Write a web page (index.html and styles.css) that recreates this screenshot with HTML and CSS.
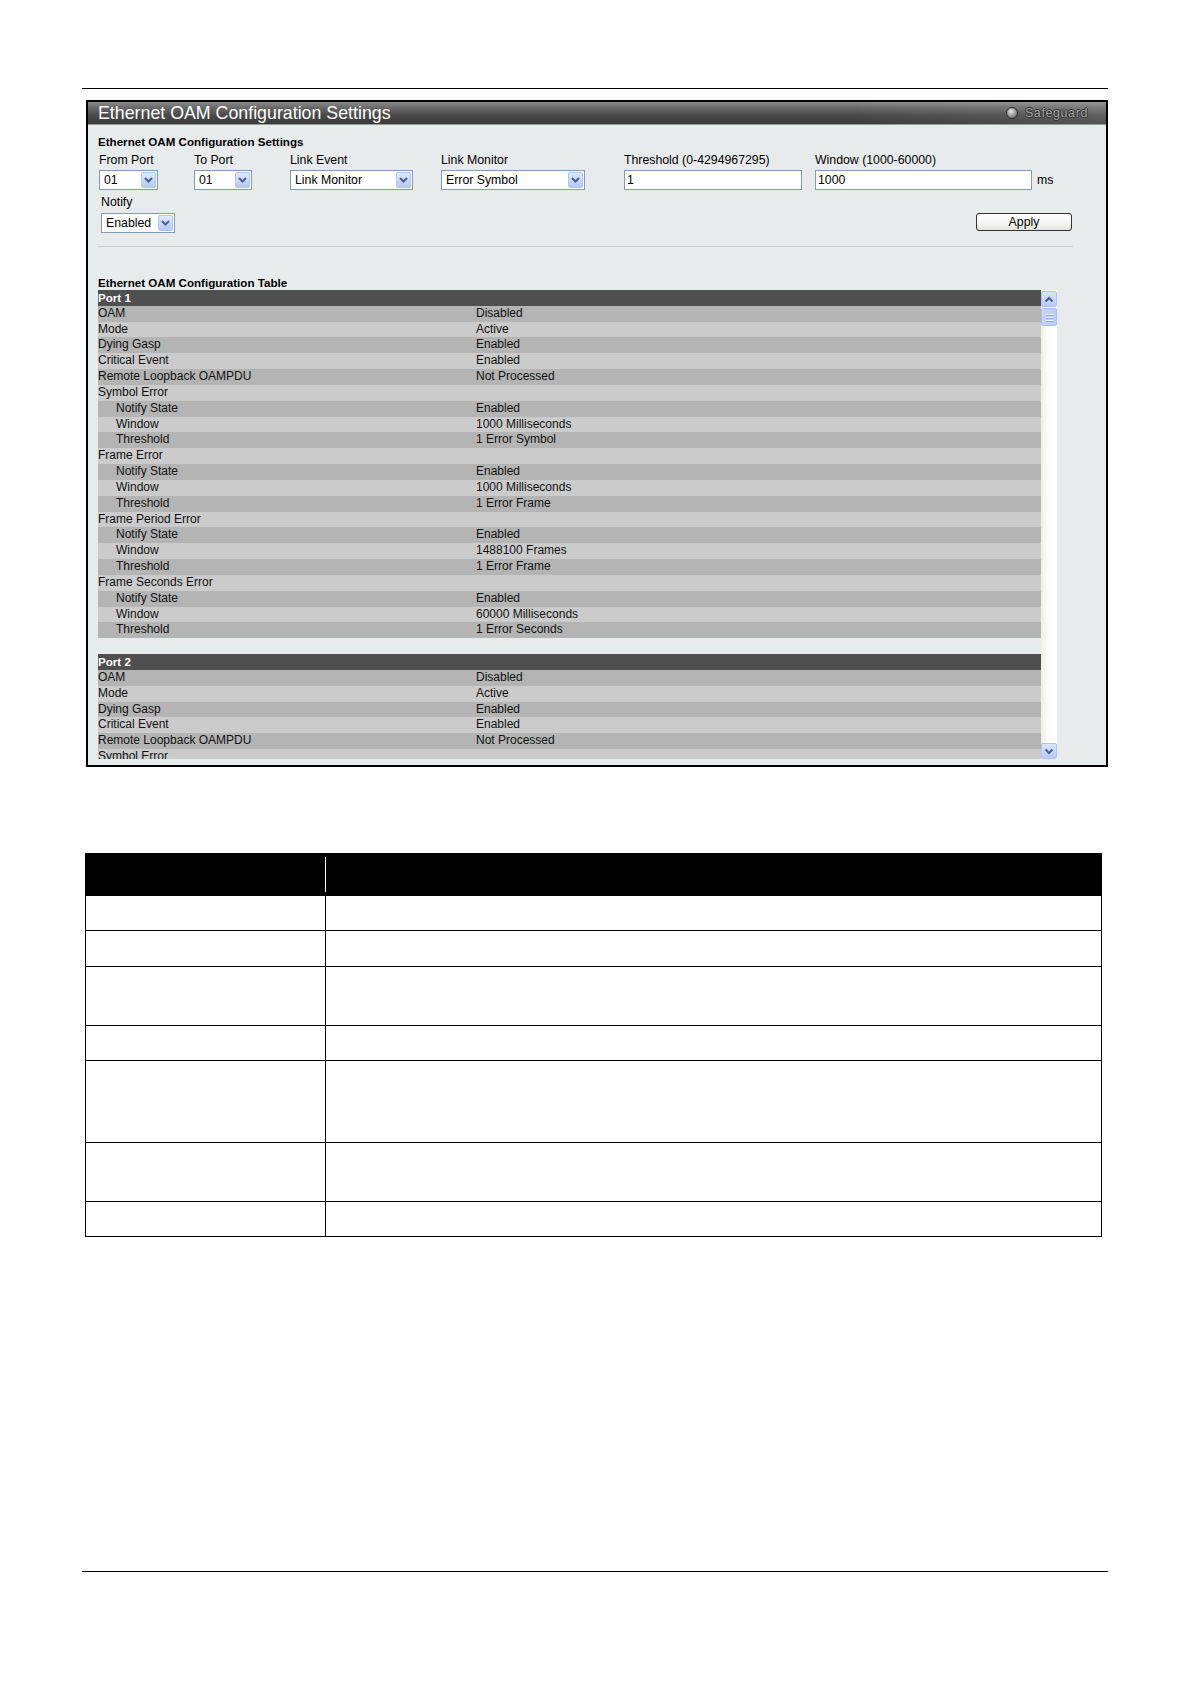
FILE: index.html
```html
<!DOCTYPE html>
<html>
<head>
<meta charset="utf-8">
<link rel="stylesheet" href="styles.css">
</head>
<body>
<div class="page">
  <div class="rule rule-top"></div>

  <div class="panel">
    <div class="titlebar">
      <span class="title">Ethernet OAM Configuration Settings</span>
      <span class="safeguard"><span class="sg-dot"></span><span class="sg-text">Safeguard</span></span>
    </div>

    <div class="section-title">Ethernet OAM Configuration Settings</div>

    <div class="form-row">
      <div class="field f1">
        <div class="label">From Port</div>
        <div class="select w59"><span class="sv">01</span><span class="sbtn"><svg width="9" height="6" viewBox="0 0 9 6"><path d="M1 1 L4.5 4.5 L8 1" fill="none" stroke="#4a5f8a" stroke-width="2"/></svg></span></div>
      </div>
      <div class="field f2">
        <div class="label">To Port</div>
        <div class="select w58"><span class="sv">01</span><span class="sbtn"><svg width="9" height="6" viewBox="0 0 9 6"><path d="M1 1 L4.5 4.5 L8 1" fill="none" stroke="#4a5f8a" stroke-width="2"/></svg></span></div>
      </div>
      <div class="field f3">
        <div class="label">Link Event</div>
        <div class="select w123"><span class="sv">Link Monitor</span><span class="sbtn"><svg width="9" height="6" viewBox="0 0 9 6"><path d="M1 1 L4.5 4.5 L8 1" fill="none" stroke="#4a5f8a" stroke-width="2"/></svg></span></div>
      </div>
      <div class="field f4">
        <div class="label">Link Monitor</div>
        <div class="select w144"><span class="sv">Error Symbol</span><span class="sbtn"><svg width="9" height="6" viewBox="0 0 9 6"><path d="M1 1 L4.5 4.5 L8 1" fill="none" stroke="#4a5f8a" stroke-width="2"/></svg></span></div>
      </div>
      <div class="field f5">
        <div class="label">Threshold (0-4294967295)</div>
        <div class="input w178">1</div>
      </div>
      <div class="field f6">
        <div class="label">Window (1000-60000)</div>
        <div class="input-line"><div class="input w217">1000</div><span class="unit">ms</span></div>
      </div>
    </div>

    <div class="form-row2">
      <div class="field notify">
        <div class="label">Notify</div>
        <div class="select w74"><span class="sv">Enabled</span><span class="sbtn"><svg width="9" height="6" viewBox="0 0 9 6"><path d="M1 1 L4.5 4.5 L8 1" fill="none" stroke="#4a5f8a" stroke-width="2"/></svg></span></div>
      </div>
      <div class="apply">Apply</div>
    </div>

    <div class="separator"></div>

    <div class="table-title">Ethernet OAM Configuration Table</div>

    <div class="table-area">
      <div class="table-clip">
        <div class="port">
          <div class="port-head">Port 1</div>
          <div class="row"><span class="k">OAM</span><span class="v">Disabled</span></div>
          <div class="row"><span class="k">Mode</span><span class="v">Active</span></div>
          <div class="row"><span class="k">Dying Gasp</span><span class="v">Enabled</span></div>
          <div class="row"><span class="k">Critical Event</span><span class="v">Enabled</span></div>
          <div class="row"><span class="k">Remote Loopback OAMPDU</span><span class="v">Not Processed</span></div>
          <div class="row"><span class="k">Symbol Error</span><span class="v"></span></div>
          <div class="row"><span class="k sub">Notify State</span><span class="v">Enabled</span></div>
          <div class="row"><span class="k sub">Window</span><span class="v">1000 Milliseconds</span></div>
          <div class="row"><span class="k sub">Threshold</span><span class="v">1 Error Symbol</span></div>
          <div class="row"><span class="k">Frame Error</span><span class="v"></span></div>
          <div class="row"><span class="k sub">Notify State</span><span class="v">Enabled</span></div>
          <div class="row"><span class="k sub">Window</span><span class="v">1000 Milliseconds</span></div>
          <div class="row"><span class="k sub">Threshold</span><span class="v">1 Error Frame</span></div>
          <div class="row"><span class="k">Frame Period Error</span><span class="v"></span></div>
          <div class="row"><span class="k sub">Notify State</span><span class="v">Enabled</span></div>
          <div class="row"><span class="k sub">Window</span><span class="v">1488100 Frames</span></div>
          <div class="row"><span class="k sub">Threshold</span><span class="v">1 Error Frame</span></div>
          <div class="row"><span class="k">Frame Seconds Error</span><span class="v"></span></div>
          <div class="row"><span class="k sub">Notify State</span><span class="v">Enabled</span></div>
          <div class="row"><span class="k sub">Window</span><span class="v">60000 Milliseconds</span></div>
          <div class="row"><span class="k sub">Threshold</span><span class="v">1 Error Seconds</span></div>
        </div>
        <div class="port port-next">
          <div class="port-head">Port 2</div>
          <div class="row"><span class="k">OAM</span><span class="v">Disabled</span></div>
          <div class="row"><span class="k">Mode</span><span class="v">Active</span></div>
          <div class="row"><span class="k">Dying Gasp</span><span class="v">Enabled</span></div>
          <div class="row"><span class="k">Critical Event</span><span class="v">Enabled</span></div>
          <div class="row"><span class="k">Remote Loopback OAMPDU</span><span class="v">Not Processed</span></div>
          <div class="row"><span class="k">Symbol Error</span><span class="v"></span></div>
        </div>
      </div>
      <div class="scrollbar">
        <div class="sb-btn"><svg width="10" height="7" viewBox="0 0 10 7"><path d="M1.5 5.5 L5 2 L8.5 5.5" fill="none" stroke="#4a5f8a" stroke-width="2"/></svg></div>
        <div class="sb-thumb"><span></span><span></span><span></span></div>
        <div class="sb-track"></div>
        <div class="sb-btn"><svg width="10" height="7" viewBox="0 0 10 7"><path d="M1.5 1.5 L5 5 L8.5 1.5" fill="none" stroke="#4a5f8a" stroke-width="2"/></svg></div>
      </div>
    </div>
  </div>

  <div class="doc">
    <div class="doc-head"><div class="dh-left"></div><div class="dh-right"></div></div>
    <div class="doc-row h35"><div class="dc-left"></div><div class="dc-right"></div></div>
    <div class="doc-row h36"><div class="dc-left"></div><div class="dc-right"></div></div>
    <div class="doc-row h59"><div class="dc-left"></div><div class="dc-right"></div></div>
    <div class="doc-row h35"><div class="dc-left"></div><div class="dc-right"></div></div>
    <div class="doc-row h82"><div class="dc-left"></div><div class="dc-right"></div></div>
    <div class="doc-row h59"><div class="dc-left"></div><div class="dc-right"></div></div>
    <div class="doc-row h35"><div class="dc-left"></div><div class="dc-right"></div></div>
  </div>

  <div class="rule rule-bottom"></div>
</div>
</body>
</html>
```

FILE: styles.css
```css
* { box-sizing: border-box; }
html, body { margin: 0; padding: 0; background: #fff; }
body { font-family: "Liberation Sans", Arial, sans-serif; color: #000; }
.page { width: 1191px; height: 1684px; overflow: hidden; }

.rule { height: 1px; background: #000; margin-left: 82px; width: 1026px; }
.rule-top { margin-top: 88px; }
.rule-bottom { margin-top: 334px; }

.panel {
  margin-top: 11px;
  margin-left: 86px;
  width: 1022px;
  height: 667px;
  border: 2px solid #000;
  background: #e8ebeb;
}

.titlebar {
  height: 23px;
  display: flex;
  align-items: center;
  justify-content: space-between;
  padding: 0 18px 0 10px;
  background:
    linear-gradient(to right, rgba(255,255,255,0) 75%, rgba(255,255,255,0.12) 100%),
    linear-gradient(to bottom, #8a8a8a 0%, #6a6a6a 25%, #4a4a4a 60%, #3a3a3a 100%);
  border-bottom: 1px solid #9c9c9c;
}
.title { color: #fff; font-size: 17.8px; line-height: 22px; white-space: nowrap; }
.safeguard { display: flex; align-items: center; }
.sg-dot {
  width: 12px; height: 12px; border-radius: 50%;
  background: radial-gradient(circle at 40% 35%, #e8e8e8 0%, #a8a8a8 40%, #5a5a5a 100%);
  border: 1px solid #2a2a2a;
  margin-right: 7px;
}
.sg-text {
  font-size: 12.5px; color: #a4a4a4;
  text-shadow: -1px 0 0 #333, 1px 0 0 #333, 0 -1px 0 #333, 0 1px 0 #333;
  letter-spacing: 0.6px;
}

.section-title {
  margin-top: 10px;
  padding-left: 10px;
  font-weight: bold;
  font-size: 11.6px;
  line-height: 14px;
}

.label { font-size: 12.3px; line-height: 14px; white-space: nowrap; }

.form-row { display: flex; padding-left: 11px; margin-top: 4px; }
.field { flex: none; }
.f1 { width: 95px; }
.f2 { width: 96px; }
.f3 { width: 151px; }
.f4 { width: 183px; }
.f5 { width: 191px; }
.f6 { width: 260px; }

.select, .input {
  margin-top: 3px;
  height: 20px;
  background: #fff;
  border: 1px solid #7f9db9;
  font-size: 12.3px;
  line-height: 18px;
}
.select { display: flex; align-items: center; justify-content: space-between; padding-left: 4px; }
.sv { white-space: nowrap; }
.sbtn {
  width: 15px; height: 16px; margin-right: 1px;
  display: flex; align-items: center; justify-content: center;
  background: linear-gradient(to bottom, #dfe8fe 0%, #c4d4fb 60%, #b6c8f6 100%);
  border: 1px solid #b3c6f2;
  border-radius: 2px;
}
.w59 { width: 59px; }
.w58 { width: 58px; }
.w123 { width: 123px; }
.w144 { width: 144px; }
.w74 { width: 74px; }
.w178 { width: 178px; }
.w217 { width: 217px; }
.input { padding-left: 2px; }
.input-line { display: flex; align-items: center; }
.input-line .input { flex: none; }
.unit { font-size: 12.3px; margin-left: 5px; margin-top: 3px; }

.form-row2 {
  display: flex; justify-content: space-between; align-items: flex-end;
  padding-left: 13px; padding-right: 34px;
  margin-top: 5px;
}
.notify .select { margin-top: 4px; }
.apply {
  width: 96px; height: 18px;
  margin-bottom: 2px;
  border: 1px solid #333;
  border-radius: 3px;
  background: linear-gradient(to bottom, #ffffff 0%, #f4f4f2 60%, #e2e2de 100%);
  font-size: 12.3px; line-height: 16px; text-align: center;
}

.separator {
  margin: 13px 33px 0 10px;
  height: 1px;
  background: #c9cccc;
}

.table-title {
  margin-top: 29px;
  padding-left: 10px;
  font-weight: bold;
  font-size: 11.6px;
  line-height: 14px;
}

.table-area { display: flex; margin-left: 10px; width: 959px; height: 469px; }
.table-clip { width: 943px; height: 469px; overflow: hidden; }
.port-next { margin-top: 15.83px; }
.port-head {
  height: 15.83px; line-height: 15.83px;
  background: #4f4f4f; color: #fff;
  font-weight: bold; font-size: 11.6px;
}
.row {
  height: 15.83px; line-height: 15.83px;
  display: flex; font-size: 12px; color: #111;
  background: #cbcbcb;
}
.row:nth-child(even) { background: #b4b4b4; }
.k { width: 378px; white-space: nowrap; }
.k.sub { padding-left: 18px; }
.v { white-space: nowrap; }

.scrollbar {
  width: 16px; height: 469px;
  display: flex; flex-direction: column;
  background: linear-gradient(to right, #efefe7 0%, #fbfbf8 40%, #ffffff 100%);
  padding-top: 1px;
}
.sb-btn {
  height: 16px; width: 16px;
  display: flex; align-items: center; justify-content: center;
  background: linear-gradient(to bottom, #dbe5fe 0%, #c6d5fb 60%, #b8caf6 100%);
  border: 1px solid #b0c3f0;
  border-radius: 2px;
  flex: none;
}
.sb-thumb {
  height: 18px; width: 16px; margin-top: 1px;
  display: flex; flex-direction: column; align-items: center; justify-content: center; gap: 2px;
  background: linear-gradient(to right, #c8d6fc 0%, #bccdf8 100%);
  border: 1px solid #aabff2;
  border-radius: 2px;
  flex: none;
}
.sb-thumb span { width: 7px; height: 1px; background: #eef2fe; box-shadow: 0 1px 0 #8ea6df; }
.sb-track { flex: 1; }

.doc {
  margin-top: 86px;
  margin-left: 85px;
  width: 1017px;
  border-left: 1px solid #000;
  border-right: 1px solid #000;
}
.doc-head {
  height: 43px; background: #000;
  display: flex; padding: 4px 0;
}
.dh-left { width: 240px; border-right: 1px solid #fff; }
.doc-row { display: flex; border-bottom: 1px solid #000; }
.dc-left { width: 240px; border-right: 1px solid #000; }
.dc-right { flex: 1; }
.h35 { height: 35px; }
.h36 { height: 36px; }
.h59 { height: 59px; }
.h82 { height: 82px; }
```
